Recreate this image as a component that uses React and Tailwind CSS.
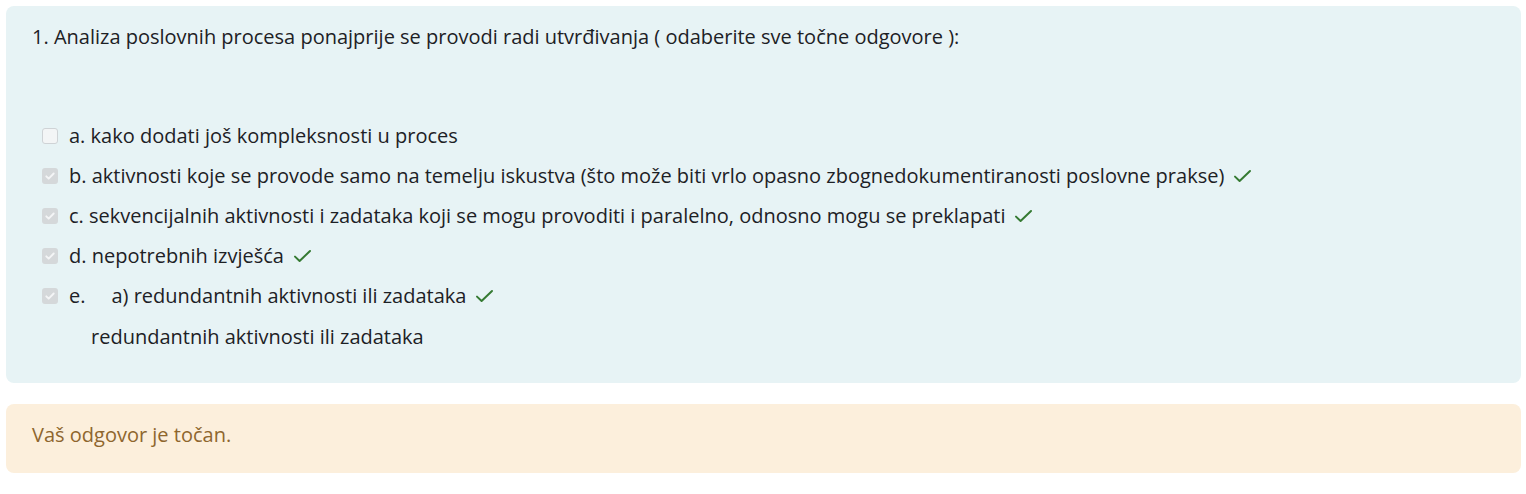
const options = [
  { id: "a", text: "a. kako dodati još kompleksnosti u proces", checked: false, correct: false },
  { id: "b", text: "b. aktivnosti koje se provode samo na temelju iskustva (što može biti vrlo opasno zbognedokumentiranosti poslovne prakse)", checked: true, correct: true },
  { id: "c", text: "c. sekvencijalnih aktivnosti i zadataka koji se mogu provoditi i paralelno, odnosno mogu se preklapati", checked: true, correct: true },
  { id: "d", text: "d. nepotrebnih izvješća", checked: true, correct: true },
];

function Box({ checked }) {
  if (!checked) {
    return <span className="block h-[16px] w-[16px] shrink-0 rounded-[3px] border-[1.5px] border-[#cfd3d6] bg-[#f3f5f6]" />;
  }
  return (
    <span className="flex h-[16px] w-[16px] shrink-0 items-center justify-center rounded-[3px] bg-[#d5d8da]">
      <svg width="12" height="12" viewBox="0 0 12 12" fill="none">
        <path d="M2.3 6.3l2.4 2.4 5-5.2" stroke="#f4f5f6" strokeWidth="1.9" strokeLinecap="round" strokeLinejoin="round" />
      </svg>
    </span>
  );
}

function Tick() {
  return (
    <svg className="ml-[9px]" width="19" height="16" viewBox="0 0 19 16" fill="none">
      <path d="M2 8.6l4.6 4.4L17 3" stroke="#357a32" strokeWidth="2" strokeLinecap="round" strokeLinejoin="round" />
    </svg>
  );
}

export default function App() {
  return (
    <div className="bg-white pl-[6px] pr-[5px] pt-[6px] pb-[20px] text-[20px] leading-[30px] text-[#1d2125]" style={{ fontFamily: '"Open Sans", "Liberation Sans", sans-serif' }}>
      <div className="rounded-[8px] bg-[#e7f3f5] pl-[26px] pr-6 pt-[16px] pb-[25px]">
        <p>1. Analiza poslovnih procesa ponajprije se provodi radi utvrđivanja ( odaberite sve točne odgovore ):</p>
        <div className="mt-[64px] pl-[10px]">
          {options.map((o) => (
            <div key={o.id} className="flex h-[40px] items-center">
              <Box checked={o.checked} />
              <span className="ml-[11px]">{o.text}</span>
              {o.correct && <Tick />}
            </div>
          ))}
          <div className="flex h-[40px] items-center">
            <Box checked />
            <span className="ml-[11px]">e.</span>
            <span className="ml-[26px]">a) redundantnih aktivnosti ili zadataka</span>
            <Tick />
          </div>
          <div className="flex h-[42px] items-center pl-[49px]">redundantnih aktivnosti ili zadataka</div>
        </div>
      </div>
      <div className="mt-[21px] rounded-[8px] bg-[#fcefdc] pl-[26px] pt-[16px] pb-[23px] text-[#8e662e]">
        Vaš odgovor je točan.
      </div>
    </div>
  );
}
